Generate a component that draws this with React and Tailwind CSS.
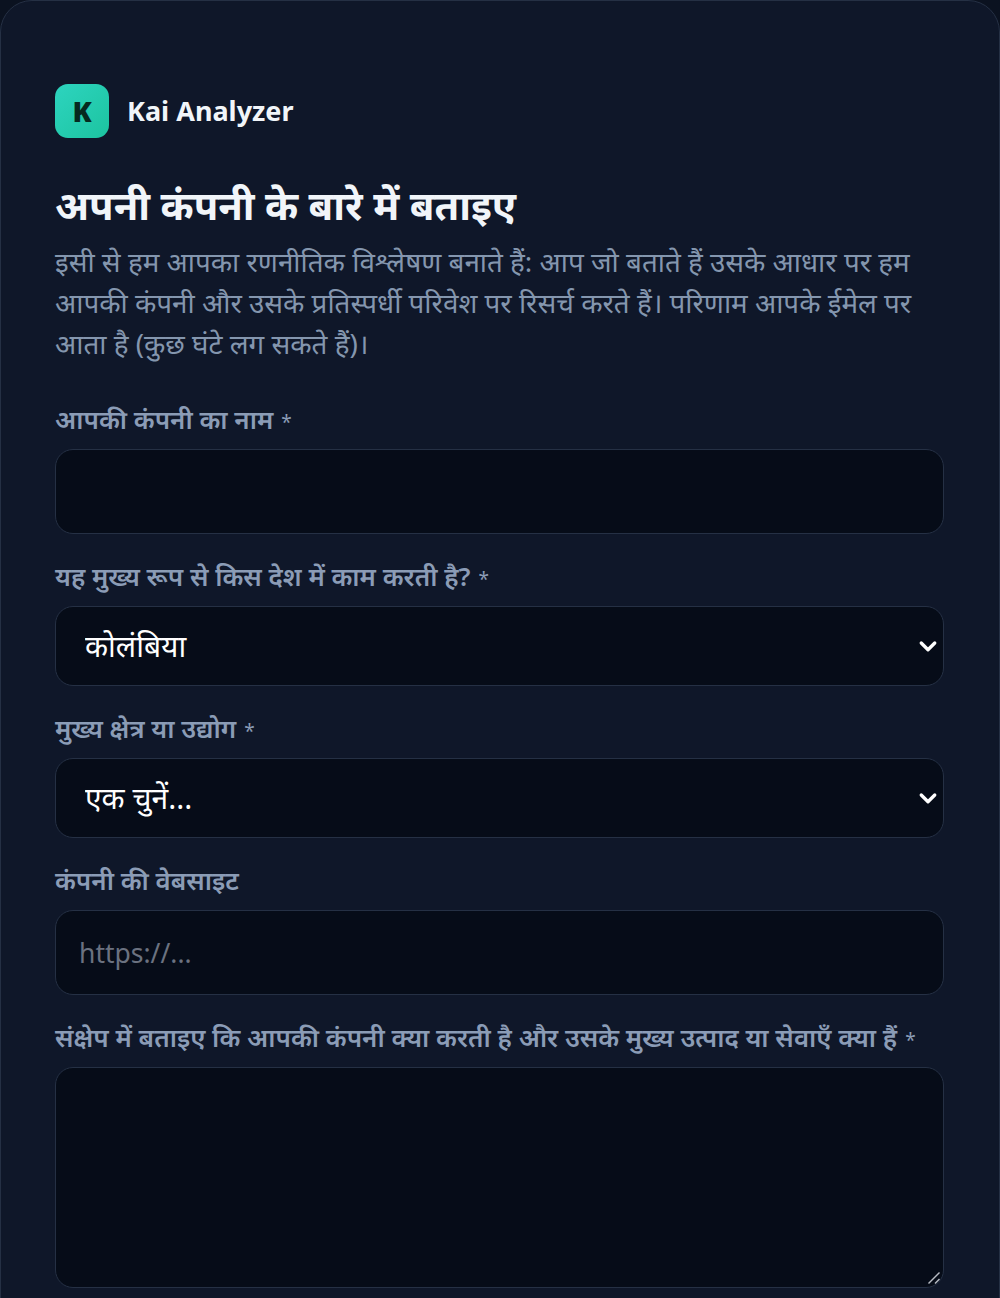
import React from "react";

const Field = ({ label, required, children, className }) => (
  <div className={className}>
    <label className="block text-[25.9px] leading-[38px] font-semibold text-[#8b9cb6] mb-[11px] whitespace-nowrap">
      {label}
      {required && <span className="ml-[8px] text-[19px] leading-none font-normal">*</span>}
    </label>
    {children}
  </div>
);

const Chevron = () => (
  <svg
    className="absolute right-[4px] top-1/2 -translate-y-1/2 pointer-events-none"
    width="24"
    height="24"
    viewBox="0 0 16 16"
    fill="none"
    stroke="#ffffff"
    strokeWidth="2.2"
    strokeLinecap="round"
    strokeLinejoin="round"
  >
    <path d="M3.5 6l4.5 4.5L12.5 6" />
  </svg>
);

const SelectBox = ({ value }) => (
  <div className="relative">
    <select
      defaultValue={value}
      className="block w-full h-[80px] appearance-none rounded-[18px] border border-[#253044] bg-[#060c18] pl-[29px] pb-[2px] text-[30px] text-white outline-none"
    >
      <option>{value}</option>
    </select>
    <Chevron />
  </div>
);

export default function App() {
  return (
    <div
      className="h-[1298px] overflow-hidden bg-[#0b1220]"
      style={{ fontFamily: '"Noto Sans", "Noto Sans CJK SC", sans-serif' }}
    >
      <div className="h-[1400px] rounded-t-[32px] border border-[#253044] bg-[#0f1729] pl-[54px] pr-[55px] pt-[83px]">
        <div className="flex items-center gap-[18px]">
          <div className="flex h-[54px] w-[54px] items-center justify-center rounded-[13px] bg-gradient-to-br from-[#2dd4bf] to-[#1cc4a0] text-[28px] font-black text-[#06291f]">
            K
          </div>
          <span className="text-[27px] font-bold text-[#f1f5f9]">Kai Analyzer</span>
        </div>
        <h1 className="mt-[37px] text-[40px] leading-[60px] font-bold text-[#f1f5f9]">
          अपनी कंपनी के बारे में बताइए
        </h1>
        <p className="mt-[6px] text-[27.8px] leading-[41px] text-[#8496ae]">
          इसी से हम आपका रणनीतिक विश्लेषण बनाते हैं: आप जो बताते हैं उसके आधार पर हम आपकी कंपनी और उसके प्रतिस्पर्धी परिवेश पर रिसर्च करते हैं। परिणाम आपके ईमेल पर आता है (कुछ घंटे लग सकते हैं)।
        </p>
        <Field label="आपकी कंपनी का नाम" required className="mt-[36px]">
          <input className="block h-[85px] w-full rounded-[18px] border border-[#253044] bg-[#060c18] outline-none" />
        </Field>
        <Field label="यह मुख्य रूप से किस देश में काम करती है?" required className="mt-[23px]">
          <SelectBox value="कोलंबिया" />
        </Field>
        <Field label="मुख्य क्षेत्र या उद्योग" required className="mt-[23px]">
          <SelectBox value="एक चुनें..." />
        </Field>
        <Field label="कंपनी की वेबसाइट" className="mt-[23px]">
          <input
            placeholder="https://..."
            className="block h-[85px] w-full rounded-[18px] border border-[#253044] bg-[#060c18] px-[23px] text-[26.5px] text-white outline-none placeholder:text-[#6b7280]"
          />
        </Field>
        <Field
          label="संक्षेप में बताइए कि आपकी कंपनी क्या करती है और उसके मुख्य उत्पाद या सेवाएँ क्या हैं"
          required
          className="mt-[23px]"
        >
          <div className="relative">
            <textarea className="block h-[221px] w-full resize-none rounded-[18px] border border-[#253044] bg-[#060c18] outline-none" />
            <svg
              className="absolute right-[3px] bottom-[3px] pointer-events-none"
              width="14"
              height="14"
              viewBox="0 0 14 14"
              fill="none"
              stroke="#b8bcc4"
              strokeWidth="1.4"
            >
              <path d="M1.5 12.5L12.5 1.5" />
              <path d="M8 12.5L12.5 8" />
            </svg>
          </div>
        </Field>
      </div>
    </div>
  );
}
